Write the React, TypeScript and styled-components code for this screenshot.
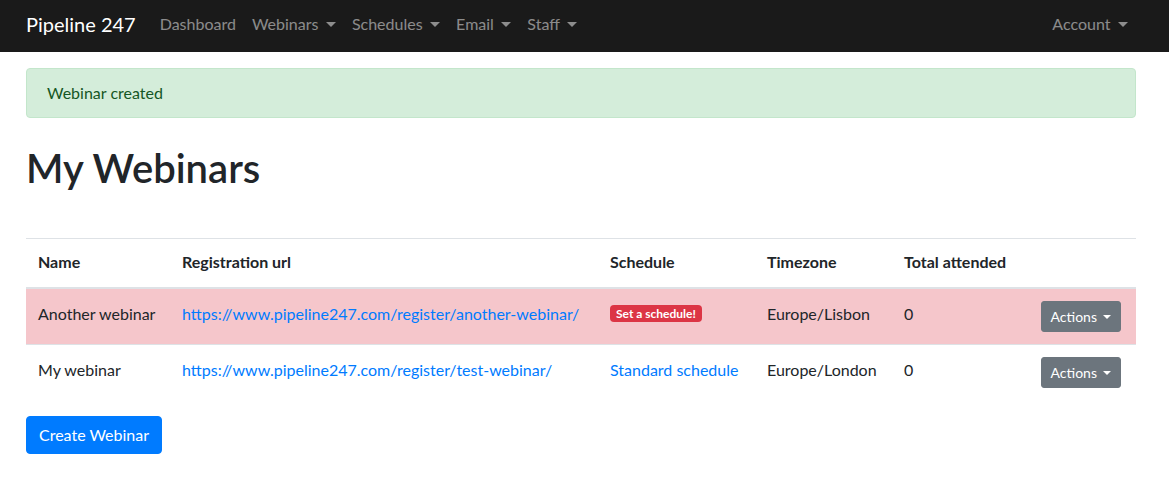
import React from "react";
import styled, { createGlobalStyle } from "styled-components";

const Global = createGlobalStyle`
  html, body { margin: 0; padding: 0; background: #fff; }
  body {
    font-family: Lato, "Noto Sans", sans-serif;
    font-size: 16px;
    line-height: 1.5;
    color: #212529;
  }
  * { box-sizing: border-box; }
`;

const Navbar = styled.nav`
  background: #1a1a1a;
  height: 52px;
`;

const NavInner = styled.div`
  width: 1110px;
  margin-left: 26px;
  height: 100%;
  display: flex;
  align-items: center;
  padding-bottom: 4px;
`;

const Brand = styled.a`
  color: #fff;
  font-size: 20px;
  margin-right: 16px;
  text-decoration: none;
  line-height: 30px;
`;

const NavList = styled.div`
  display: flex;
  align-items: center;
  flex: 1;
`;

const NavLink = styled.a`
  color: rgba(255, 255, 255, 0.5);
  padding: 8px;
  font-size: 16px;
  text-decoration: none;
  display: inline-flex;
  align-items: center;
  white-space: nowrap;
`;

const Caret = styled.span<{ $size?: number }>`
  display: inline-block;
  margin-left: ${(p) => (p.$size ?? 5) * 1.5}px;
  width: 0;
  height: 0;
  border-top: ${(p) => p.$size ?? 5}px solid currentColor;
  border-left: ${(p) => p.$size ?? 5}px solid transparent;
  border-right: ${(p) => p.$size ?? 5}px solid transparent;
`;

const Container = styled.main`
  width: 1110px;
  margin-left: 26px;
  padding-top: 16px;
`;

const Alert = styled.div`
  background: #d4edda;
  border: 1px solid #c3e6cb;
  color: #155724;
  border-radius: 4px;
  padding: 12px 20px;
  margin-bottom: 16px;
`;

const Title = styled.h1`
  font-size: 40px;
  font-weight: 600;
  line-height: 1.2;
  margin: 26px 0 46px;
`;

const Table = styled.table`
  width: 100%;
  border-collapse: collapse;
  margin-bottom: 16px;
  white-space: nowrap;
`;

const Th = styled.th<{ $w?: number }>`
  text-align: left;
  font-weight: 700;
  padding: 11px 12px 13px;
  border-top: 1px solid #dee2e6;
  border-bottom: 2px solid #dee2e6;
  vertical-align: bottom;
  width: ${(p) => (p.$w ? `${p.$w}px` : "auto")};
`;

const Tr = styled.tr<{ $danger?: boolean }>`
  background: ${(p) => (p.$danger ? "#f5c6cb" : "transparent")};
`;

const Td = styled.td<{ $right?: boolean }>`
  padding: ${(p) => (p.$right ? "12px" : "9px 12px 15px")};
  border-top: 1px solid #dee2e6;
  vertical-align: middle;
  text-align: ${(p) => (p.$right ? "right" : "left")};
  height: 55px;
`;

const Link = styled.a`
  color: #007bff;
  text-decoration: none;
`;

const Badge = styled.span`
  display: inline-block;
  background: #dc3545;
  color: #fff;
  font-size: 12px;
  font-weight: 700;
  line-height: 1;
  padding: 3px 6px 2px;
  border-radius: 4px;
  vertical-align: 2px;
`;

const SmallBtn = styled.button`
  background: #6c757d;
  border: 1px solid #6c757d;
  color: #fff;
  font-family: inherit;
  font-size: 14px;
  line-height: 1.5;
  padding: 4px 9px;
  border-radius: 3px;
  display: inline-flex;
  align-items: center;
  margin-right: 3px;
`;

const PrimaryBtn = styled.button`
  background: #007bff;
  border: 1px solid #007bff;
  color: #fff;
  font-family: inherit;
  font-size: 16px;
  line-height: 1.5;
  padding: 6px 12px;
  border-radius: 4px;
`;

const rows = [
  {
    name: "Another webinar",
    url: "https://www.pipeline247.com/register/another-webinar/",
    schedule: null as string | null,
    tz: "Europe/Lisbon",
    total: 0,
  },
  {
    name: "My webinar",
    url: "https://www.pipeline247.com/register/test-webinar/",
    schedule: "Standard schedule",
    tz: "Europe/London",
    total: 0,
  },
];

export default function App() {
  return (
    <>
      <Global />
      <Navbar>
        <NavInner>
          <Brand href="#">Pipeline 247</Brand>
          <NavList>
            <NavLink href="#">Dashboard</NavLink>
            <NavLink href="#">
              Webinars <Caret />
            </NavLink>
            <NavLink href="#">
              Schedules <Caret />
            </NavLink>
            <NavLink href="#">
              Email <Caret />
            </NavLink>
            <NavLink href="#">
              Staff <Caret />
            </NavLink>
          </NavList>
          <NavLink href="#">
            Account <Caret />
          </NavLink>
        </NavInner>
      </Navbar>
      <Container>
        <Alert>Webinar created</Alert>
        <Title>My Webinars</Title>
        <Table>
          <thead>
            <tr>
              <Th $w={144}>Name</Th>
              <Th $w={428}>Registration url</Th>
              <Th $w={157}>Schedule</Th>
              <Th $w={137}>Timezone</Th>
              <Th $w={130}>Total attended</Th>
              <Th />
            </tr>
          </thead>
          <tbody>
            {rows.map((r) => (
              <Tr key={r.name} $danger={!r.schedule}>
                <Td>{r.name}</Td>
                <Td>
                  <Link href="#">{r.url}</Link>
                </Td>
                <Td>
                  {r.schedule ? (
                    <Link href="#">{r.schedule}</Link>
                  ) : (
                    <Badge>Set a schedule!</Badge>
                  )}
                </Td>
                <Td>{r.tz}</Td>
                <Td>{r.total}</Td>
                <Td $right>
                  <SmallBtn>
                    Actions <Caret $size={4} />
                  </SmallBtn>
                </Td>
              </Tr>
            ))}
          </tbody>
        </Table>
        <PrimaryBtn>Create Webinar</PrimaryBtn>
      </Container>
    </>
  );
}
